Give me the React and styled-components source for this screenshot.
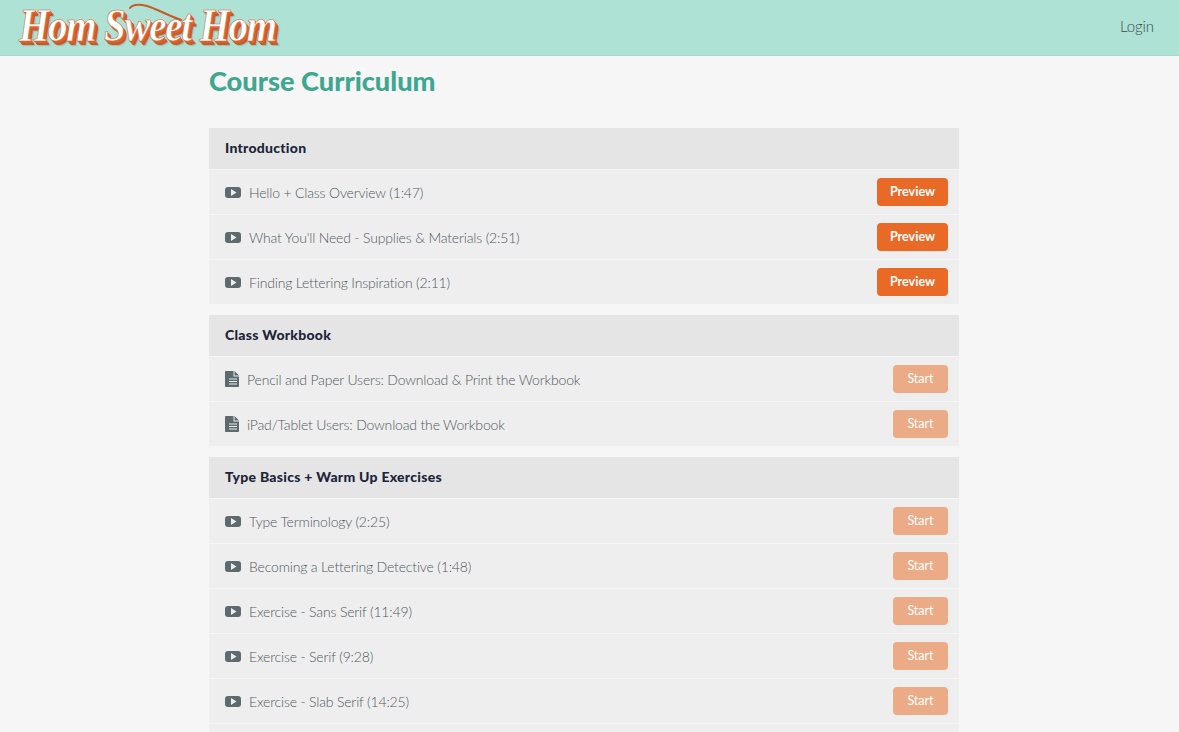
import React from "react";
import styled, { createGlobalStyle } from "styled-components";

const Global = createGlobalStyle`
  html, body { margin: 0; padding: 0; background: #f6f6f6; overflow: hidden; height: 732px; }
  body { font-family: "Lato", "Liberation Sans", sans-serif; }
`;
const Header = styled.header`
  height: 55px; background: #ade2d4; border-bottom: 1px solid #a3d8ca;
  display: flex; align-items: center; justify-content: space-between;
  padding: 0 25px 0 19px;
`;
const LogoWrap = styled.div`
  position: relative; width: 260px; height: 55px;
`;
const Logo = styled.div`
  font-family: "Liberation Serif", serif; font-style: italic; font-weight: 700;
  font-size: 47px; line-height: 50px; letter-spacing: -1.5px; color: #fff; white-space: nowrap;
  transform: scaleX(0.83); transform-origin: left center;
  -webkit-text-stroke: 0.6px #d8622c;
  text-shadow: 1px 1px 0 #d8622c, 2px 2px 0 #d8622c, 3px 3px 0 #c9592a, 4px 4px 0 #c9592a, 5px 5px 1px #8fc5b7;
`;
const Swash = styled.svg`
  position: absolute; left: 110px; top: 2px;
`;
const Login = styled.a`
  font-size: 15px; font-weight: 300; letter-spacing: -0.1px; color: #3f4a4c; margin-top: -4px;
`;
const Main = styled.main`
  width: 750px; margin-left: 209px;
`;
const Title = styled.h1`
  margin: 0; padding-top: 9px; height: 72px; box-sizing: border-box;
  font-family: "Lato", sans-serif; font-size: 27.2px; line-height: 32px; font-weight: 900;
  color: #3ea78f;
`;
const Section = styled.section`
  margin-bottom: 10px; display: flex; flex-direction: column;
`;
const SectionTitle = styled.div`
  height: 41px; box-sizing: border-box; background: #e5e5e5; padding: 0 16px 2px; margin-bottom: 1px;
  display: flex; align-items: center;
  font-size: 14px; letter-spacing: 0.27px; font-weight: 900; color: #20243a;
`;
const Row = styled.div`
  height: 44px; background: #eeeeee; margin-bottom: 1px; padding: 0 11px 0 16px;
  display: flex; align-items: center; justify-content: space-between;
`;
const Label = styled.div`
  display: flex; align-items: center; gap: 8px;
  font-size: 14px; letter-spacing: -0.17px; font-weight: 300; color: #4f5a5c;
`;
const Btn = styled.a`
  height: 28px; display: flex; align-items: center; justify-content: center; box-sizing: border-box;
  border-radius: 4px; color: #fff; font-size: 12.5px; padding-bottom: 2px;
  width: ${p => p.$preview ? 71 : 55}px; font-weight: ${p => p.$preview ? 700 : 400};
  background: ${p => p.$preview ? "#e96a27" : "#ecab87"};
`;
const PlaySvg = styled.svg`
  margin-top: 1px;
`;
const DocSvg = styled.svg`
  margin-top: -1px;
`;
const Play = () => (
  <PlaySvg width="16" height="11" viewBox="0 0 16 11"><rect width="16" height="11" rx="3" fill="#5d6a6e"/><path d="M6 2l5.500 3.500-5.500 3.500z" fill="#eeeeee"/></PlaySvg>
);
const Doc = () => (
  <DocSvg width="14" height="16" viewBox="0 0 14 16"><path d="M0 1C0 .4.4 0 1 0h7.500v5.500H14v9.500c0 .6-.4 1-1 1H1c-.6 0-1-.4-1-1z" fill="#5d6a6e"/><path d="M9.500 0L14 4.500H9.500z" fill="#5d6a6e"/><path d="M4 8h8M4 10.500h8M4 13h8" stroke="#eeeeee" strokeWidth="1"/></DocSvg>
);

const data = [
  ["Introduction", true, [
    ["v", "Hello + Class Overview (1:47)"],
    ["v", "What You'll Need - Supplies & Materials (2:51)"],
    ["v", "Finding Lettering Inspiration (2:11)"]]],
  ["Class Workbook", false, [
    ["d", "Pencil and Paper Users: Download & Print the Workbook"],
    ["d", "iPad/Tablet Users: Download the Workbook"]]],
  ["Type Basics + Warm Up Exercises", false, [
    ["v", "Type Terminology (2:25)"],
    ["v", "Becoming a Lettering Detective (1:48)"],
    ["v", "Exercise - Sans Serif (11:49)"],
    ["v", "Exercise - Serif (9:28)"],
    ["v", "Exercise - Slab Serif (14:25)"],
    ["v", ""]]],
];

export default function App() {
  return (
    <>
      <Global />
      <Header>
        <LogoWrap>
          <Logo>Hom Sweet Hom</Logo>
          <Swash width="56" height="20" viewBox="0 0 56 20">
            <path d="M1 6C4 2 10 2 18 4C28 7 38 13 52 18" fill="none" stroke="#c9592a" strokeWidth="2" strokeLinecap="round"/>
          </Swash>
        </LogoWrap>
        <Login>Login</Login>
      </Header>
      <Main>
        <Title>Course Curriculum</Title>
        {data.map(([t, prev, rows]) => (
          <Section key={t}>
            <SectionTitle>{t}</SectionTitle>
            {rows.map(([k, r], i) => (
              <Row key={i}>
                <Label>{k === "v" ? <Play /> : <Doc />}{r}</Label>
                {r && <Btn $preview={prev}>{prev ? "Preview" : "Start"}</Btn>}
              </Row>
            ))}
          </Section>
        ))}
      </Main>
    </>
  );
}
